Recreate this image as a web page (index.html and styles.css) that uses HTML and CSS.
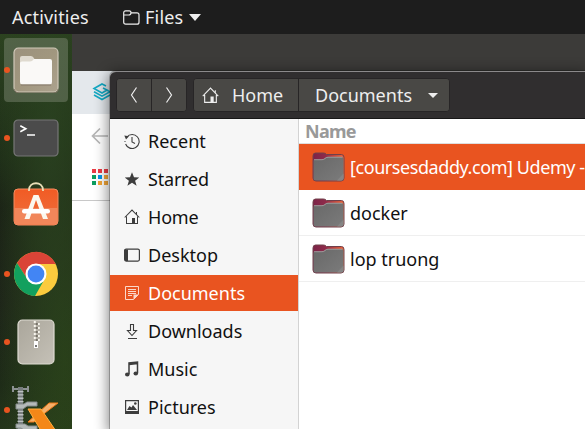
FILE: index.html
```html
<!DOCTYPE html>
<html lang="en">
<head>
<meta charset="utf-8">
<title>Files</title>
<link rel="stylesheet" href="styles.css">
</head>
<body>
<svg class="defs" aria-hidden="true">
  <defs>
    <linearGradient id="flap"><stop offset="0" stop-color="#7b2348"/><stop offset=".4" stop-color="#8e2b4a"/><stop offset="1" stop-color="#eb6536"/></linearGradient>
    <linearGradient id="gray" x2="1" y2="1"><stop stop-color="#686868"/><stop offset="1" stop-color="#7b7b7b"/></linearGradient>
    <linearGradient id="beige" x2="1" y2="1"><stop stop-color="#9b917d"/><stop offset=".5" stop-color="#a1977f"/><stop offset="1" stop-color="#aca28e"/></linearGradient>
    <linearGradient id="orange" x2="0" y2="1"><stop stop-color="#f15b24"/><stop offset="1" stop-color="#ef713f"/></linearGradient>
    <linearGradient id="zip" x2="1" y2="1"><stop stop-color="#aaa69b"/><stop offset="1" stop-color="#c5c1b7"/></linearGradient>
    <symbol id="home" viewBox="0 0 16 16"><path d="M.7 8.500 8 1.100l7.300 7.400M2.500 7.500v7h11v-7M12.500 3v2.500" fill="none" stroke="currentColor" stroke-width="1.050"/><path d="M8 9h3v6H8z" fill="currentColor"/></symbol>
    <symbol id="folder" viewBox="0 0 33 30"><path d="M1 4Q1 1 3.500 1h8q2 0 3 1.500h15q2.500 0 2.500 3V26q0 3-3 3H4q-3 0-3-3z" fill="url(#flap)" stroke="#70404b" stroke-width="1"/><path d="M1.500 9Q1.500 7.500 3 7.500h7c3 0 3-2.500 6-2.500h13.500q2 0 2 2v19q0 2.500-2.500 2.500H4q-2.500 0-2.500-2.500z" fill="url(#gray)"/><path d="M2 7.700h8c3 0 3-2.500 6-2.500h14.500" fill="none" stroke="#aaa" stroke-width=".8"/><path d="m25 28.500 6.500-7V26q0 2.500-2.500 2.500z" fill="#858585"/></symbol>
  </defs>
</svg>
<div class="desktop">
  <header class="topbar">
    <span class="activities">Activities</span>
    <svg class="top-folder" width="17" height="15" viewBox="0 0 17 15"><path d="M.7 3Q.7.8 2.700.8h3.500q1.800 0 1.800 2h6q2 0 2 2v7.400q0 2-2 2H2.700q-2 0-2-2zM.7 5h5Q8 5 8 2.800" fill="none" stroke="#eee" stroke-width="1.200"/></svg>
    <span class="app-name">Files</span>
    <svg width="12" height="7" viewBox="0 0 12 7"><path d="M0 0h12L6 7z" fill="#eee"/></svg>
  </header>
  <div class="workspace">
    <nav class="dock">
      <div class="app files selected"><i class="dot"></i>
        <svg width="46" height="46" viewBox="0 0 46 46"><rect x="1" y="1" width="44" height="44" rx="4.500" fill="url(#beige)" stroke="#d1c9ba" stroke-width="1.200"/><path d="M1 42q1 4 5 4h34q5 0 5-4" fill="none" stroke="#7d7462"/><path d="M7 11q0-2 2-2h9q2 0 3.500 3H36v8H7z" fill="#dfdacf"/><path d="M7 16q0-1.500 2-1.500h8q2 0 4-2.500h16q2 0 2 2v21q0 2.500-2 2.500H9q-2 0-2-2.500z" fill="#faf9f7"/><path d="M8 38h30" stroke="#85796a"/></svg>
      </div>
      <div class="app terminal"><i class="dot"></i>
        <svg width="46" height="38" viewBox="0 0 46 38"><rect x="1" y="1" width="44" height="36" rx="4" fill="#4b4b4b" stroke="#777" stroke-width="1.200"/><path d="m7.300 6.700 5.500 3-5.500 3M14 16h8" fill="none" stroke="#fff" stroke-width="1.600"/></svg>
      </div>
      <div class="app software">
        <svg width="46" height="44" viewBox="0 0 46 44"><rect x="1" y="7" width="44" height="36" rx="4" fill="url(#orange)" stroke="#f48b60"/><path d="M1.500 26h43v13q0 3.500-4 3.500H5q-3.500 0-3.500-3.500z" fill="#f1865a"/><path d="M16 9V8c0-9 14-9 14 0v1" fill="none" stroke="#e9dfb8" stroke-width="1.800"/><path d="M20.500 13h5l9.500 24h-5l-7-19-6.500 19h-5z" fill="#fbf8ef"/><rect x="9" y="27" width="28" height="4.500" rx="2.200" fill="#fff"/></svg>
      </div>
      <div class="app chrome"><i class="dot"></i>
        <svg width="46" height="46" viewBox="0 0 46 46"><circle cx="23" cy="23" r="22" fill="#fbcb3e"/><path d="M4 12A22 22 0 0 1 42.800 13H23a10 10 0 0 0-8.700 15z" fill="#da4437"/><path d="M4 12l10.300 16A10 10 0 0 0 31.700 28L22 45A22 22 0 0 1 4 12z" fill="#12a05e"/><circle cx="23" cy="23" r="10.500" fill="#fff"/><circle cx="23" cy="23" r="8.400" fill="#4285f4"/></svg>
      </div>
      <div class="app archive"><i class="dot"></i>
        <svg width="38" height="46" viewBox="0 0 38 46"><rect x="1" y="1" width="36" height="44" rx="4.500" fill="url(#zip)" stroke="#dedbd2" stroke-width="1.200"/><path d="M17.800 2v20M21.800 4v20" stroke="#f7f5ed" stroke-width="2" stroke-dasharray="2 2"/><path d="M19.800 2v20" stroke="#77736a" stroke-width="2" stroke-dasharray="2 2" stroke-dashoffset="2"/><path d="M17 22h4v7h-4z" fill="#fff"/><path d="M18 26h2v2h-2z" fill="#777"/></svg>
      </div>
      <div class="app clamp"><i class="dot"></i>
        <svg width="48" height="50" viewBox="0 0 48 50"><path d="M1 3h15M1 0v6M16 0v6" stroke="#8c9192" stroke-width="2"/><path d="M8.500 1v42" stroke="#777d7e" stroke-width="5"/><path d="M8.500 5v38" stroke="#bdc2c2" stroke-width="6" stroke-dasharray="1.300 2"/><path d="M4 18h8l3-2h10v4H15l-4 3H4zM4 38h9l3 2h9v4H12l-3-2H4z" fill="#b4bab9" stroke="#858c8c"/><path d="m16 36 21-19h9L29 30l-7 6z" fill="#f4b06c" stroke="#f07816"/><path d="M16 23h13l17 25H31z" fill="#f48718" stroke="#ffae3e"/></svg>
      </div>
    </nav>
    <section class="browser">
      <div class="browser-title"></div>
      <div class="tab-strip"><svg width="20" height="18" viewBox="0 0 20 18"><path d="M14 3 10 1 2 5.500l8 4.500 5-3-4-2M2 8.800l8 4.400 8-4.400-3-1.500M2 12l8 4.500 8-4.500" fill="none" stroke="#13a9c4" stroke-width="1.600"/></svg></div>
      <div class="nav-strip"><svg width="18" height="18" viewBox="0 0 18 18"><path d="M17 9H2M9 1.500 1.500 9 9 16.500" fill="none" stroke="#b6b6b6" stroke-width="1.700"/></svg></div>
      <div class="bookmarks"><div class="apps"><i class="r"></i><i class="r"></i><i class="r"></i><i class="g"></i><i class="b"></i><i class="y"></i><i class="g"></i><i class="y"></i><i class="y"></i></div></div>
    </section>
  </div>
  <main class="window">
    <header class="toolbar">
      <div class="group history">
        <button><svg width="8" height="16" viewBox="0 0 8 16"><path d="M6.500.5 1.500 8l5 7.500" fill="none" stroke="#eee" stroke-width="1.200"/></svg></button>
        <button><svg width="8" height="16" viewBox="0 0 8 16"><path d="m1.500.5 5 7.500-5 7.500" fill="none" stroke="#eee" stroke-width="1.200"/></svg></button>
      </div>
      <div class="group path">
        <button class="crumb-home"><svg width="17" height="17"><use href="#home"/></svg><span>Home</span></button>
        <button class="crumb-docs"><span class="documents">Documents</span><svg width="10" height="5" viewBox="0 0 10 5"><path d="M0 0h10L5 5z" fill="#eee"/></svg></button>
      </div>
    </header>
    <div class="content">
      <aside class="places">
        <div class="place"><svg width="16" height="16" viewBox="0 0 16 16"><path d="M2.800 4A7 7 0 1 1 1.600 11M8 4v5l3 1.500" fill="none" stroke="currentColor" stroke-width="1.100"/><path d="M.3 2.500 5 3.200 2 6.500z" fill="currentColor"/><path d="M1 8v1" stroke="currentColor"/></svg><span>Recent</span></div>
        <div class="place"><svg width="16" height="16" viewBox="0 0 16 16"><path d="m8 1.200 2 5 5.300.2-4.200 3.300 1.500 5L8 11.800l-4.600 2.900 1.500-5L.7 6.400 6 6.200z" fill="currentColor"/></svg><span class="starred">Starred</span></div>
        <div class="place"><svg width="16" height="16"><use href="#home"/></svg><span class="home">Home</span></div>
        <div class="place"><svg width="16" height="16" viewBox="0 0 16 16"><rect x=".6" y="2.100" width="14.800" height="12" rx="1.500" fill="none" stroke="currentColor" stroke-width="1.200"/><path d="M1 2.500h3V14H1z" fill="currentColor"/></svg><span>Desktop</span></div>
        <div class="place active"><svg width="16" height="16" viewBox="0 0 16 16"><path d="M1.500 1.500h13v8l-5 5h-8zM4 4.500h8M4 6.500h8M4 8.500h8M4 10.500h4" fill="none" stroke="currentColor"/><path d="M9.500 14.500v-5h5z" fill="currentColor"/></svg><span>Documents</span></div>
        <div class="place"><svg width="16" height="16" viewBox="0 0 16 16"><path d="M6.500 1.500h3v6h3L8 12.500 3.500 7.500h3zM4 15.500h9" fill="none" stroke="currentColor" stroke-width="1.100"/></svg><span>Downloads</span></div>
        <div class="place"><svg width="16" height="16" viewBox="0 0 16 16"><path d="M5 13V2l8.500-1v11M5 3.500l8.500-1" fill="none" stroke="currentColor" stroke-width="1.500"/><ellipse cx="3.300" cy="13.500" rx="2.300" ry="1.900" fill="currentColor"/><ellipse cx="11.800" cy="12.500" rx="2.300" ry="1.900" fill="currentColor"/></svg><span>Music</span></div>
        <div class="place"><svg width="16" height="16" viewBox="0 0 16 16"><path d="M1.600 1.600h12.800v12.800H1.600z" fill="none" stroke="currentColor" stroke-width="1.200"/><path d="M1 12h14v3H1z" fill="currentColor"/><path d="m3 11 2.500-4 2 1.500L9 6l4 5z" fill="currentColor"/><circle cx="11.300" cy="4.500" r="1.300" fill="currentColor"/></svg><span>Pictures</span></div>
      </aside>
      <section class="listing">
        <div class="column-name"><span>Name</span></div>
        <div class="row active"><svg width="33" height="30"><use href="#folder"/></svg><span class="course">[coursesdaddy.com] Udemy -</span></div>
        <div class="row"><svg width="33" height="30"><use href="#folder"/></svg><span class="docker">docker</span></div>
        <div class="row"><svg width="33" height="30"><use href="#folder"/></svg><span class="lop">lop truong</span></div>
      </section>
    </div>
  </main>
</div>
</body>
</html>
```

FILE: styles.css
```css
* { box-sizing: border-box; }
body { margin: 0; width: 585px; height: 429px; overflow: hidden; font: 18px/24px "Noto Sans", "Open Sans", sans-serif; color: #111; }
svg { display: block; flex: none; }
span { white-space: nowrap; }
.defs { position: absolute; width: 0; height: 0; }
.desktop { position: relative; width: 585px; height: 429px; overflow: hidden; display: flex; flex-direction: column; }
.topbar { height: 34px; flex: none; padding-left: 12px; display: flex; align-items: center; background: #1d1d1d; color: #eee; }
.activities { width: 111px; letter-spacing: .18px; }
.app-name { margin-left: 5px; width: 40px; margin-right: 4px; letter-spacing: .2px; }
.workspace { flex: 1; display: flex; min-height: 0; }
.dock { width: 72px; flex: none; overflow: hidden; display: flex; flex-direction: column; padding: 4px 4px 0;
  background: radial-gradient(ellipse at 50px 95px, rgba(43, 67, 34, .75) 0, transparent 65px), radial-gradient(ellipse at 65px 325px, rgba(43, 68, 23, .85) 0, transparent 85px), linear-gradient(165deg, #2c421f 0, #1c2a17 30%, #161914 42%, #1a1c19 65%, #1b2618 85%, #26351d 100%); }
.app { position: relative; height: 64px; margin-bottom: 4px; flex: none; display: flex; align-items: center; justify-content: center; border-radius: 4px; }
.selected { background: rgba(125, 135, 115, .48); }
.software svg { margin-top: -4px; }
.clamp svg { margin: 2px 0 0; }
.dot { position: absolute; left: 0; top: 29px; width: 6px; height: 6px; border-radius: 50%; background: #e95420; }
.browser { flex: 1; background: #fff; }
.browser-title { height: 37px; background: #3c3b39; }
.tab-strip { height: 43px; padding: 12px 20px; background: #e4e8ec; }
.nav-strip { height: 42px; padding: 13px 19px; }
.bookmarks { height: 45px; padding: 13px 20px; border-bottom: 1px solid #c8c8c8; }
.apps { width: 17px; display: grid; grid-template-columns: repeat(3, 4px); gap: 2px; }
.apps i { height: 4px; }
.r { background: #eb3c45; }
.g { background: #0c9e60; }
.b { background: #0794e8; }
.y { background: #f3a638; }
.window { position: absolute; left: 110px; top: 71px; width: 475px; height: 358px; overflow: hidden; border-top: 1px solid #8b898b; border-radius: 6px 0 0; box-shadow: 0 3px 14px 2px rgba(0, 0, 0, .48), 0 0 0 1px rgba(0, 0, 0, .22); background: #fff; }
.toolbar { height: 47px; padding: 6px; display: flex; gap: 7px; background: #302e2f; border-bottom: 1px solid #171717; }
.group { display: flex; height: 34px; border: 1px solid #272526; border-radius: 4px; overflow: hidden; background: #494845; }
.history { width: 71px; }
.path { width: 257px; margin-left: -1px; }
button { margin: 0; padding: 0; border: 0; background: #494845; color: #eee; font: inherit; display: flex; align-items: center; }
button + button { border-left: 1px solid #272526; }
.history button { flex: 1; justify-content: center; }
.crumb-home { width: 104px; padding-left: 8px; gap: 13px; }
.crumb-docs { flex: 1; padding-left: 16px; }
.crumb-docs svg { margin-left: 16px; }
.content { display: flex; height: 310px; }
.places { width: 189px; flex: none; padding-top: 3px; background: #f6f6f6; border-right: 1px solid #d3d3d3; }
.place { height: 38px; padding-left: 14px; display: flex; align-items: center; gap: 8px; color: #3d3d3d; border-block: 1px solid #f6f6f6; }
.place span { color: #111; }
.starred, .home { letter-spacing: -.2px; }
.place.active { background: #e95420; color: #fbd8ca; }
.place.active span { color: #fff; }
.listing { flex: 1; min-width: 0; background: #fff; }
.column-name { height: 25px; padding-left: 6px; border-bottom: 1px solid #dedede; color: #999; font-weight: 700; letter-spacing: -.7px; }
.row { height: 46px; padding-left: 13px; display: flex; align-items: center; gap: 5px; border-bottom: 1px solid #efefef; }
.row.active { background: #e95420; color: #fff; border-color: #e95420; }
.course { letter-spacing: -.43px; }
```
